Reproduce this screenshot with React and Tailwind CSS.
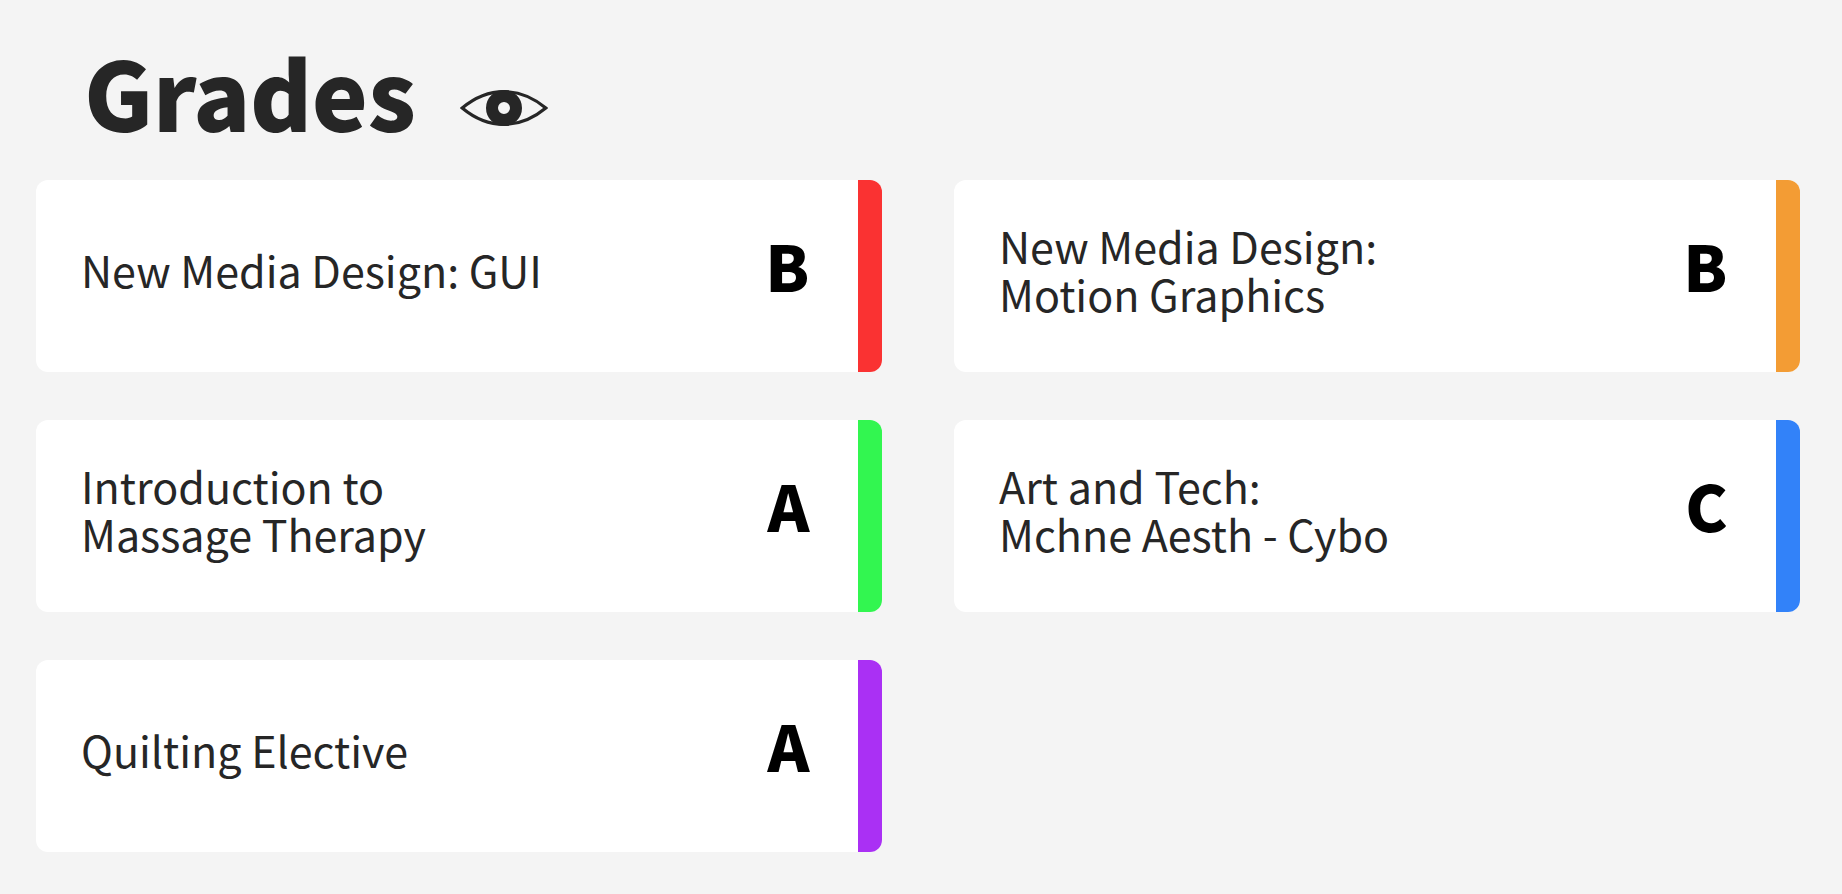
const courses = [
  { lines: ["New Media Design: GUI"], grade: "B", bar: "bg-[#fa3232]" },
  { lines: ["New Media Design:", "Motion Graphics"], grade: "B", bar: "bg-[#f39c34]" },
  { lines: ["Introduction to", "Massage Therapy"], grade: "A", bar: "bg-[#32f650]" },
  { lines: ["Art and Tech:", "Mchne Aesth - Cybo"], grade: "C", bar: "bg-[#3282f9]" },
  { lines: ["Quilting Elective"], grade: "A", bar: "bg-[#aa30f4]" },
];

function Eye() {
  return (
    <svg className="mt-9 h-9 w-[88px]" viewBox="0 0 88 36" fill="none">
      <path
        d="M2.200 18C16 6.500 30 1.600 44 1.600S72 6.500 85.800 18C72 29.500 58 34.400 44 34.400S16 29.500 2.200 18Z"
        stroke="#262626"
        strokeWidth="3.200"
      />
      <circle cx="44" cy="18" r="12" stroke="#262626" strokeWidth="12" />
    </svg>
  );
}

function Card({ lines, grade, bar }) {
  return (
    <div className="flex h-48 overflow-hidden rounded-xl bg-white">
      <div className="flex flex-1 items-center justify-between pl-[45px] pr-[48.5px]">
        <div className="pb-[14px] text-[43px] leading-[48px] text-[#262626]">
          {lines.map((line) => (
            <div key={line}>{line}</div>
          ))}
        </div>
        <div className="pb-[22px] text-[63.5px] font-black leading-none text-black">{grade}</div>
      </div>
      <div className={`w-6 ${bar}`} />
    </div>
  );
}

export default function App() {
  return (
    <div className="h-[894px] w-[1842px] overflow-hidden bg-[#f4f4f4] font-['Noto_Sans_CJK_SC','Noto_Sans',sans-serif]">
      <header className="flex h-[180px] items-center pl-[84px]">
        <h1 className="w-[376px] pt-[2px] text-[94.5px] font-black leading-none tracking-[-0.4px] text-[#262626]">Grades</h1>
        <Eye />
      </header>
      <main className="grid grid-cols-[846px_846px] gap-x-[72px] gap-y-12 pl-9">
        {courses.map((course) => (
          <Card key={course.lines[0]} {...course} />
        ))}
      </main>
    </div>
  );
}
